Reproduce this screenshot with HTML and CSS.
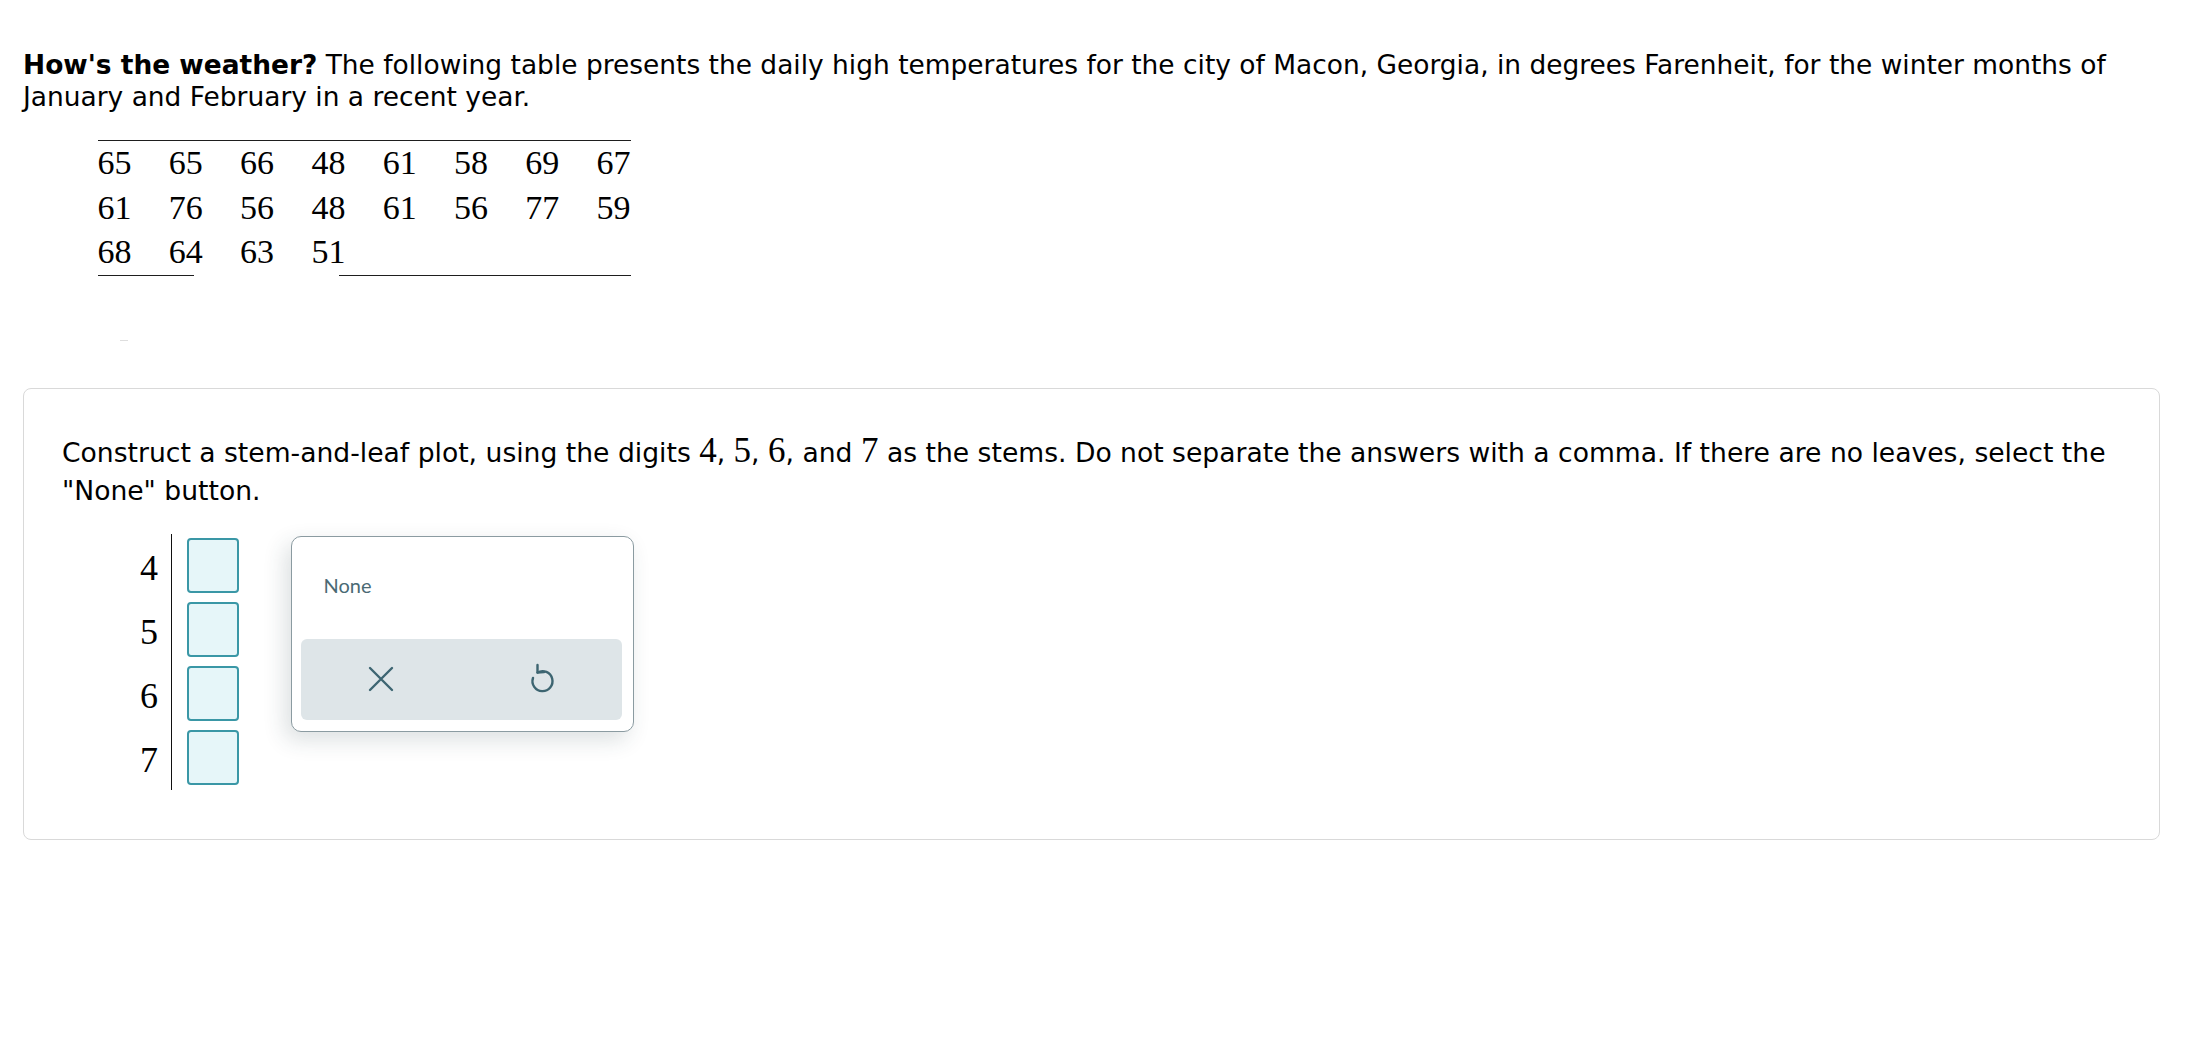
FILE: index.html
```html
<!DOCTYPE html>
<html lang="en">
<head>
<meta charset="utf-8">
<title>Stem-and-leaf plot</title>
<link rel="stylesheet" href="styles.css">
</head>
<body>
<div class="page">
  <p class="intro"><b>How's the weather?</b> The following table presents the daily high temperatures for the city of Macon, Georgia, in degrees Farenheit, for the winter months of January and February in a recent year.</p>

  <div class="data">
    <div class="grid">
      <span>65</span><span>65</span><span>66</span><span>48</span><span>61</span><span>58</span><span>69</span><span>67</span>
      <span>61</span><span>76</span><span>56</span><span>48</span><span>61</span><span>56</span><span>77</span><span>59</span>
      <span>68</span><span>64</span><span>63</span><span>51</span>
    </div>
    <div class="rule"><span class="seg seg-left"></span><span class="seg seg-right"></span></div>
  </div>

  <div class="dash"></div>

  <section class="card">
    <p class="question">Construct a stem-and-leaf plot, using the digits <span class="m">4</span>, <span class="m">5</span>, <span class="m">6</span>, and <span class="m">7</span> as the stems. Do not separate the answers with a comma. If there are no leaves, select the "None" button.</p>

    <div class="plot">
      <div class="stems">
        <span class="stem">4</span>
        <span class="stem">5</span>
        <span class="stem">6</span>
        <span class="stem">7</span>
      </div>
      <div class="leaves">
        <span class="box"></span>
        <span class="box"></span>
        <span class="box"></span>
        <span class="box"></span>
      </div>
      <div class="popup">
        <div class="opts"><span class="none-btn">None</span></div>
        <div class="actions">
          <span class="act">
            <svg width="26" height="26" viewBox="0 0 26 26" fill="none" stroke="currentColor" stroke-width="2.4" stroke-linecap="round"><path d="M2 2 L24 24 M24 2 L2 24"/></svg>
          </span>
          <span class="act">
            <svg width="28" height="34" viewBox="0 0 28 34" fill="none" stroke="currentColor" stroke-width="2.4" stroke-linecap="round" stroke-linejoin="round"><path d="M9.5 10.5 A10 10 0 1 1 5 16"/><path d="M9.5 3 L9.5 10.5 L16 10"/></svg>
          </span>
        </div>
      </div>
    </div>
  </section>
</div>
</body>
</html>
```

FILE: styles.css
```css
* {
  box-sizing: border-box;
}

body {
  margin: 0;
  background: #ffffff;
  color: #000000;
  font-family: "DejaVu Sans", Verdana, sans-serif;
}

.page {
  padding: 49px 25px 40px 23px;
}

.intro {
  margin: 0;
  font-size: 26.45px;
  line-height: 31.5px;
}

.data {
  margin: 28px 0 0 74.5px;
  width: 533.5px;
}

.grid {
  display: grid;
  grid-template-columns: repeat(8, 34px);
  column-gap: 37.3px;
  border-top: 1px solid #1e1e1e;
  font-family: "Liberation Serif", "Times New Roman", serif;
  font-size: 34px;
  line-height: 44.7px;
}

.rule {
  display: flex;
  justify-content: space-between;
  height: 1px;
}

.seg {
  display: block;
  border-top: 1px solid #1e1e1e;
}

.seg-left {
  width: 96px;
}

.seg-right {
  width: 292.5px;
}

.dash {
  margin: 64px 0 0 97px;
  width: 8px;
  height: 1px;
  background: #dedede;
}

.card {
  margin-top: 47px;
  border: 1px solid #d9d9d9;
  border-radius: 8px;
  padding: 43.5px 38px 46px 38px;
}

.question {
  margin: 0;
  font-size: 26.6px;
  line-height: 38px;
}

.m {
  font-family: "Liberation Serif", "Times New Roman", serif;
  font-size: 35px;
  line-height: 1;
}

.plot {
  margin-top: 24px;
  display: flex;
  align-items: flex-start;
}

.stems {
  width: 109px;
  padding: 7px 13px 5px 0;
  display: flex;
  flex-direction: column;
  gap: 9px;
  text-align: right;
  font-family: "Liberation Serif", "Times New Roman", serif;
  font-size: 36px;
  line-height: 55px;
}

.stem {
  display: block;
  height: 55px;
}

.leaves {
  border-left: 1.5px solid #111111;
  padding: 4px 0 5px 14.5px;
  display: flex;
  flex-direction: column;
  gap: 9px;
}

.box {
  display: block;
  width: 52px;
  height: 55px;
  background: #e6f6f9;
  border: 2px solid #3a97a6;
  border-radius: 4px;
}

.popup {
  margin: 2px 0 0 52px;
  width: 343.6px;
  height: 196.3px;
  background: #ffffff;
  border: 1px solid #8b9ba1;
  border-radius: 10px;
  box-shadow: -6px 8px 22px rgba(40, 60, 70, 0.16);
  padding: 10px 11px 11px 9px;
  display: flex;
  flex-direction: column;
}

.opts {
  height: 92px;
  padding: 26px 0 0 23px;
}

.none-btn {
  font-family: Lato, "Open Sans", sans-serif;
  font-size: 20px;
  line-height: 24px;
  color: #4b6a74;
}

.actions {
  flex: 1;
  background: #dee5e8;
  border-radius: 6px;
  display: grid;
  grid-template-columns: 1fr 1fr;
  align-items: center;
  justify-items: center;
  color: #3d6571;
}

.act {
  display: flex;
  align-items: center;
  justify-content: center;
}

.act svg {
  display: block;
}
```
